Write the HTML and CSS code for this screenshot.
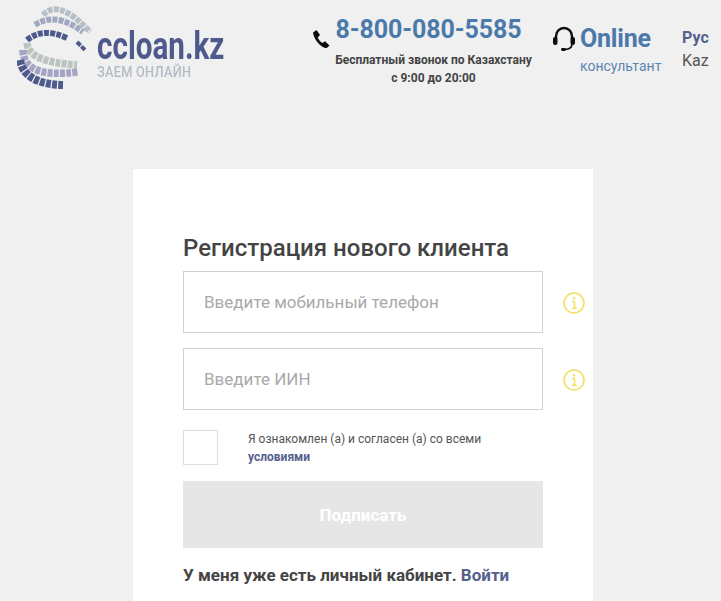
FILE: index.html
```html
<!DOCTYPE html>
<html lang="ru">
<head>
<meta charset="utf-8">
<title>ccloan.kz</title>
<link rel="stylesheet" href="styles.css">
</head>
<body>
<header class="header">
  <a class="logo">
    <svg class="logo-mark" width="80" height="90" viewBox="0 0 80 90" fill="none">
      <g stroke-dasharray="5 1.2">
        <path d="M26 9 Q42 -8 73 26" stroke="#b7bfc6" stroke-width="6"/>
        <path d="M18 19 Q38 5 66 26" stroke="#a3a8c2" stroke-width="6"/>
        <path d="M10 34 Q26 21 50 32" stroke="#4f5a8c" stroke-width="6"/>
        <path d="M60 36 L68 44" stroke="#4f5a8c" stroke-width="4"/>
        <path d="M10 37 Q11 56 60 59" stroke="#bcc4c0" stroke-width="7.5"/>
        <path d="M6 44 Q6 73 61 66" stroke="#a5a4c6" stroke-width="7.5"/>
        <path d="M3 54 Q7 78 46 79" stroke="#4f5a8c" stroke-width="8"/>
      </g>
    </svg>
    <div class="logo-text">
      <div class="logo-name">ccloan.kz</div>
      <div class="logo-sub">ЗАЕМ ОНЛАЙН</div>
    </div>
  </a>
  <div class="phone">
    <svg class="phone-icon" width="18" height="20" viewBox="0 0 18 20"><path d="M1 3.5 L4.5 1 L8 6 L5.8 8.2 C6.5 10.5 8 12.5 10.5 14 L13 12.2 L17.5 16.5 L14.8 19 C11 20 2 12 1 3.5Z" fill="#0c0c0c"/></svg>
    <div class="phone-body">
      <div class="phone-num">8-800-080-5585</div>
      <div class="phone-note">Бесплатный звонок по Казахстану<br>с 9:00 до 20:00</div>
    </div>
  </div>
  <div class="online">
    <svg class="online-icon" width="24" height="26" viewBox="0 0 24 26" fill="none"><path d="M4 13 V10 a8 8 0 0 1 16 0 V13" stroke="#0c0c0c" stroke-width="2.4"/><rect x="1" y="11" width="4.5" height="8" rx="2" fill="#0c0c0c"/><rect x="18.5" y="11" width="4.5" height="8" rx="2" fill="#0c0c0c"/><path d="M20 18 Q20 23 13 23.5" stroke="#0c0c0c" stroke-width="1.6"/><rect x="9" y="22" width="5" height="3" rx="1.4" fill="#0c0c0c"/></svg>
    <div>
      <div class="online-title">Online</div>
      <div class="online-sub">консультант</div>
    </div>
  </div>
  <div class="langs">
    <div class="lang-active">Рус</div>
    <div class="lang">Kaz</div>
  </div>
</header>
<main class="card">
  <h1 class="title">Регистрация нового клиента</h1>
  <div class="field">
    <div class="input">Введите мобильный телефон</div>
    <svg class="info" width="22" height="22" viewBox="0 0 22 22" fill="none"><circle cx="11" cy="11" r="10" stroke="#f3df5d" stroke-width="1.5"/><path d="M9 9.5 H11.5 V16 M8.8 16.2 H13.8" stroke="#f3df5d" stroke-width="1.5"/><circle cx="11" cy="6.2" r="1.2" fill="#f3df5d"/></svg>
  </div>
  <div class="field">
    <div class="input">Введите ИИН</div>
    <svg class="info" width="22" height="22" viewBox="0 0 22 22" fill="none"><circle cx="11" cy="11" r="10" stroke="#f3df5d" stroke-width="1.5"/><path d="M9 9.5 H11.5 V16 M8.8 16.2 H13.8" stroke="#f3df5d" stroke-width="1.5"/><circle cx="11" cy="6.2" r="1.2" fill="#f3df5d"/></svg>
  </div>
  <div class="agree">
    <div class="check"></div>
    <div class="agree-text">Я ознакомлен (а) и согласен (а) со всеми<br><a class="agree-link">условиями</a></div>
  </div>
  <div class="btn">Подписать</div>
  <p class="login">У меня уже есть личный кабинет. <a class="login-link">Войти</a></p>
</main>
</body>
</html>
```
FILE: styles.css
```css
* { box-sizing: border-box; }
html, body { margin: 0; height: 601px; overflow: hidden; }
body { background: #f0f0f0; font-family: Roboto, sans-serif; color: #444; }
.header { height: 169px; display: flex; align-items: flex-start; }
.logo { display: flex; margin: 6px 0 0 17px; width: 295px; flex: none; }
.logo-mark { filter: blur(.5px); flex: none; }
.logo-text { margin: 22px 0 0 0; filter: blur(.3px); }
.logo-name { font-size: 38px; line-height: 36px; font-weight: 700; color: #4f5a8c; transform: scaleX(.78); transform-origin: left; white-space: nowrap; }
.logo-sub { font-size: 14.5px; line-height: 16px; font-weight: 500; color: #b4bcc4; transform: scaleX(.88); transform-origin: left; white-space: nowrap; letter-spacing: .3px; margin-top: 1px; }
.phone { display: flex; flex: none; width: 240px; }
.phone-icon { margin-top: 29px; flex: none; }
.phone-body { margin: 14px 0 0 5px; width: 197px; text-align: center; }
.phone-num { font-size: 25px; line-height: 32px; font-weight: 700; color: #4a79aa; white-space: nowrap; margin-left: -10px; letter-spacing: -.1px; }
.phone-note { font-size: 12px; line-height: 18px; font-weight: 700; margin-top: 5px; white-space: nowrap; }
.online { display: flex; flex: none; width: 130px; margin-top: 23px; }
.online-icon { margin-top: 3px; margin-right: 4px; flex: none; }
.online-title { font-size: 25px; line-height: 32px; font-weight: 700; color: #4a79aa; letter-spacing: -.2px; }
.online-sub { font-size: 14px; line-height: 18px; color: #5f86b2; margin-top: 2px; }
.langs { margin-top: 26px; font-size: 16px; line-height: 23px; }
.lang-active { font-weight: 700; color: #55608d; }
.lang { color: #555; }
.card { width: 460px; height: 432px; margin-left: 133px; background: #fff; padding: 64px 50px 0; }
.title { margin: 0 0 8px; font-size: 24px; line-height: 30px; font-weight: 500; color: #444; }
.field { position: relative; width: 360px; margin-bottom: 15px; }
.input { height: 62px; border: 1px solid #d2d2d2; padding: 0 20px; display: flex; align-items: center; font-size: 17px; color: #a9a9a9; }
.info { position: absolute; left: 380px; top: 21px; }
.agree { display: flex; margin-top: 20px; }
.check { width: 35px; height: 35px; border: 1px solid #ddd; flex: none; }
.agree-text { margin-left: 30px; font-size: 12px; line-height: 18px; color: #555; }
.agree-link { font-weight: 700; color: #55608d; }
.btn { width: 360px; height: 67px; margin-top: 15px; background: #e6e6e6; color: #fff; font-size: 17px; font-weight: 700; display: flex; align-items: center; justify-content: center; }
.login { margin: 17px 0 0; font-size: 17px; line-height: 20px; font-weight: 700; color: #444; }
.login-link { color: #55608d; }
```
